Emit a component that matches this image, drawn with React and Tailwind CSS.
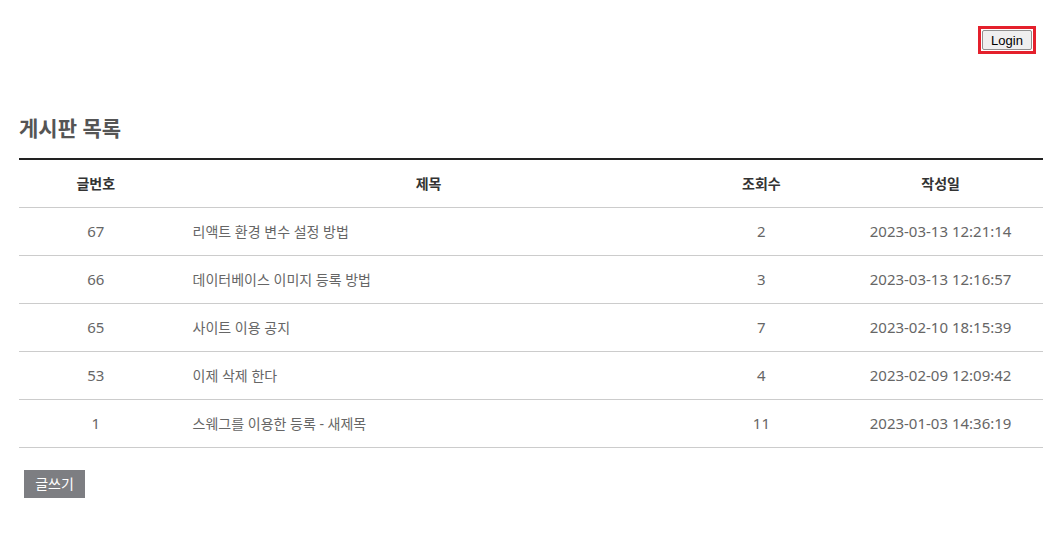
import React from "react";

const posts = [
  { id: 67, title: "리액트 환경 변수 설정 방법", views: 2, date: "2023-03-13 12:21:14" },
  { id: 66, title: "데이터베이스 이미지 등록 방법", views: 3, date: "2023-03-13 12:16:57" },
  { id: 65, title: "사이트 이용 공지", views: 7, date: "2023-02-10 18:15:39" },
  { id: 53, title: "이제 삭제 한다", views: 4, date: "2023-02-09 12:09:42" },
  { id: 1, title: "스웨그를 이용한 등록 - 새제목", views: 11, date: "2023-01-03 14:36:19" },
];

function App() {
  return (
    <div
      className="min-h-[533px] bg-white pl-[19px] pr-[18px]"
      style={{ fontFamily: '"Noto Sans", "Noto Sans CJK KR", sans-serif' }}
    >
      {/* 상단 로그인 */}
      <div className="flex justify-end pt-[26px] pr-[7px]">
        <div className="flex border-[3px] border-[#e4202c] p-[1px]">
          <button
            className="w-[50px] h-[20px] bg-[#efefef] border border-[#8f8f8f] rounded-[2px] text-[13px] leading-none text-black"
            style={{ fontFamily: '"Liberation Sans", Arial, sans-serif' }}
          >
            Login
          </button>
        </div>
      </div>

      <h2 className="mt-[59px] text-[21px] font-bold text-[#555] leading-[30px]">게시판 목록</h2>

      <table className="w-full mt-[15px] border-t-2 border-[#222] border-collapse text-[14px]">
        <thead>
          <tr className="border-b border-[#ccc] h-[48px]">
            <th className="w-[15%] font-bold text-[#333]">글번호</th>
            <th className="w-[50%] font-bold text-[#333]">제목</th>
            <th className="w-[15%] font-bold text-[#333]">조회수</th>
            <th className="w-[20%] font-bold text-[#333]">작성일</th>
          </tr>
        </thead>
        <tbody>
          {posts.map((p) => (
            <tr key={p.id} className="border-b border-[#ccc] h-[48px] text-[#666]">
              <td className="text-center text-[15px]">{p.id}</td>
              <td className="pl-[20px]">{p.title}</td>
              <td className="text-center text-[15px]">{p.views}</td>
              <td className="text-center text-[15px]">{p.date}</td>
            </tr>
          ))}
        </tbody>
      </table>

      <div className="mt-[22px] pl-[5px] flex">
        <button className="h-[28px] w-[61px] bg-[#7d7e82] text-white text-[14px]">글쓰기</button>
      </div>
    </div>
  );
}

export default App;
